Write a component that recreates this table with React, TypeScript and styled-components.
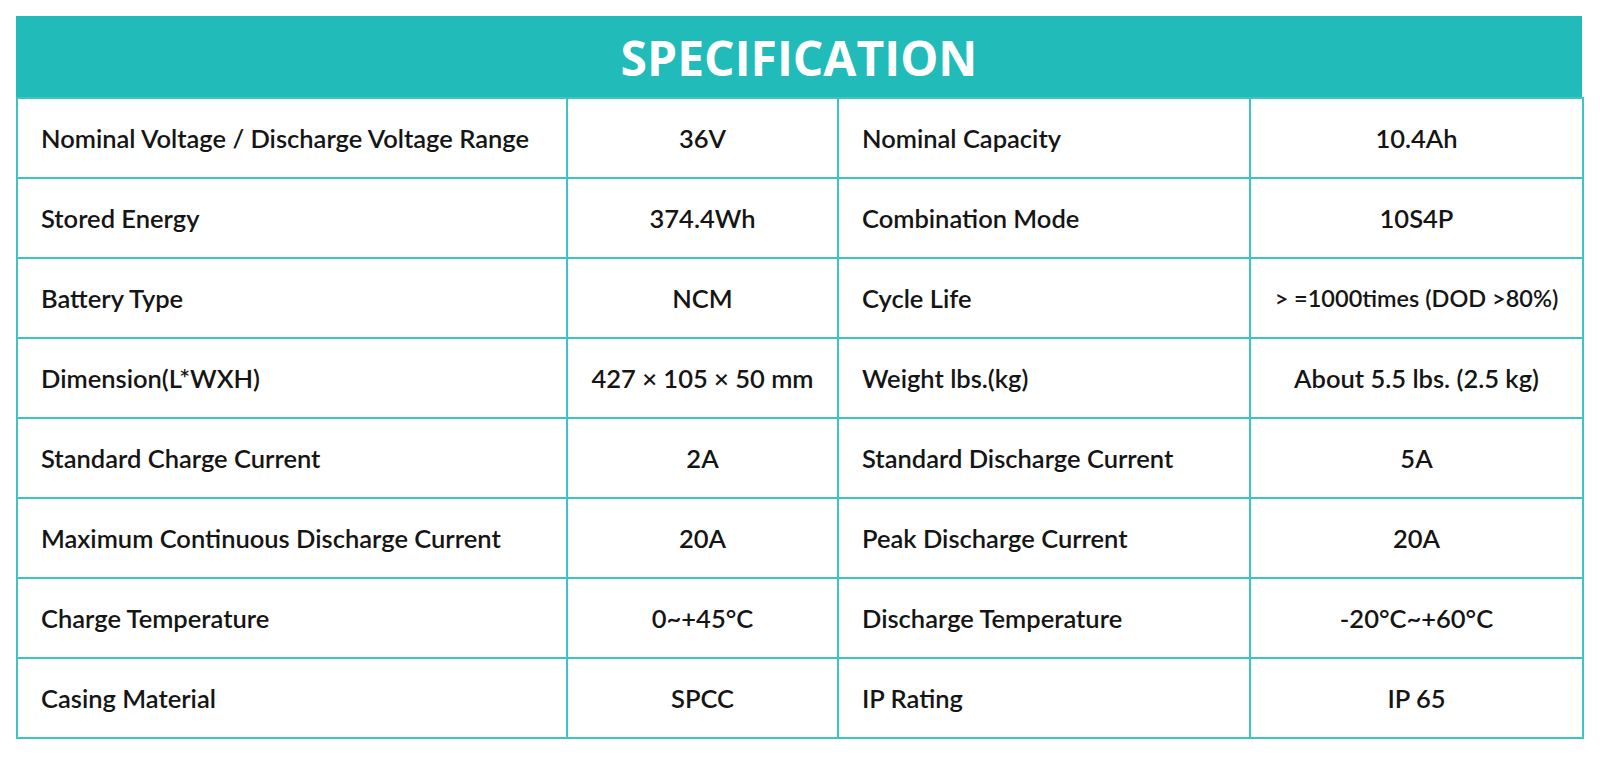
import React from "react";
import styled, { createGlobalStyle } from "styled-components";

const GlobalStyle = createGlobalStyle`
  html, body {
    margin: 0;
    padding: 0;
    background: #ffffff;
  }
  body {
    font-family: Lato, "Open Sans", sans-serif;
    color: #111111;
  }
`;

const Page = styled.div`
  padding: 16px 0 0 16px;
`;

const Sheet = styled.div`
  width: 1566px;
`;

const Banner = styled.div`
  height: 81px;
  background-color: #21bbb9;
  display: flex;
  align-items: center;
  justify-content: center;
`;

const Title = styled.h1`
  margin: 0;
  font-family: "Open Sans", sans-serif;
  font-weight: 700;
  font-size: 48px;
  color: #ffffff;
  line-height: 1;
  padding-top: 2px;
`;

const Table = styled.table`
  width: 100%;
  border-collapse: collapse;
  table-layout: fixed;
`;

const Row = styled.tr`
  height: 80px;
`;

const Cell = styled.td<{ $center?: boolean; $small?: boolean }>`
  border: 2px solid #3dc4c4;
  padding: 0 0 0 ${(p) => (p.$center ? "0" : "23px")};
  text-align: ${(p) => (p.$center ? "center" : "left")};
  font-family: Lato, sans-serif;
  font-weight: 600;
  font-size: ${(p) => (p.$small ? "23.5px" : "25.5px")};
  color: #151515;
  white-space: nowrap;
`;

interface Spec {
  label: string;
  value: string;
  label2: string;
  value2: string;
  small?: boolean;
}

const specs: Spec[] = [
  { label: "Nominal Voltage / Discharge Voltage Range", value: "36V", label2: "Nominal Capacity", value2: "10.4Ah" },
  { label: "Stored Energy", value: "374.4Wh", label2: "Combination Mode", value2: "10S4P" },
  { label: "Battery Type", value: "NCM", label2: "Cycle Life", value2: "> =1000times (DOD >80%)", small: true },
  { label: "Dimension(L*WXH)", value: "427 × 105 × 50 mm", label2: "Weight lbs.(kg)", value2: "About 5.5 lbs. (2.5 kg)" },
  { label: "Standard Charge Current", value: "2A", label2: "Standard Discharge Current", value2: "5A" },
  { label: "Maximum Continuous Discharge Current", value: "20A", label2: "Peak Discharge Current", value2: "20A" },
  { label: "Charge Temperature", value: "0~+45°C", label2: "Discharge Temperature", value2: "-20°C~+60°C" },
  { label: "Casing Material", value: "SPCC", label2: "IP Rating", value2: "IP 65" },
];

const App = () => {
  return (
    <Page>
      <GlobalStyle />
      <Sheet>
        <Banner>
          <Title>SPECIFICATION</Title>
        </Banner>
        <Table>
          <colgroup>
            <col style={{ width: 550 }} />
            <col style={{ width: 271 }} />
            <col style={{ width: 412 }} />
            <col style={{ width: 333 }} />
          </colgroup>
          <tbody>
            {specs.map((s) => (
              <Row key={s.label}>
                <Cell>{s.label}</Cell>
                <Cell $center>{s.value}</Cell>
                <Cell>{s.label2}</Cell>
                <Cell $center $small={s.small}>
                  {s.value2}
                </Cell>
              </Row>
            ))}
          </tbody>
        </Table>
      </Sheet>
    </Page>
  );
};

export default App;
